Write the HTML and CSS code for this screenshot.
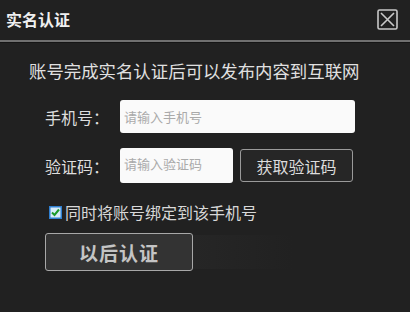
FILE: index.html
```html
<!DOCTYPE html>
<html lang="zh-CN">

<head>
  <meta charset="UTF-8">
  <title>实名认证</title>
  <link rel="stylesheet" href="styles.css">
</head>

<body>
  <div class="dialog">

    <div class="title-bar">
      <span class="title">实名认证</span>
      <span class="close">
        <svg width="21" height="21" viewBox="0 0 21 21">
          <rect x="1" y="1" width="19" height="19" rx="1.5" fill="none" stroke="#c8c8c8" stroke-width="1.6"/>
          <path d="M4 4 L17 17 M17 4 L4 17" stroke="#c8c8c8" stroke-width="1.6"/>
        </svg>
      </span>
    </div>

    <div class="body">
      <p class="intro">账号完成实名认证后可以发布内容到互联网</p>

      <div class="row phone-row">
        <label class="label">手机号：</label>
        <div class="input phone-input">请输入手机号</div>
      </div>

      <div class="row code-row">
        <label class="label">验证码：</label>
        <div class="input code-input">请输入验证码</div>
        <button class="btn get-code">获取验证码</button>
      </div>

      <div class="bind">
        <span class="checkbox">
          <svg width="13" height="13" viewBox="0 0 13 13">
            <rect x="0" y="0" width="13" height="13" fill="#2f7fd0"/>
            <rect x="1.5" y="1.5" width="10" height="10" fill="#d8ecfa"/>
            <path d="M3 6.5 L5.5 9 L10 3.5" fill="none" stroke="#1a9a2a" stroke-width="2"/>
          </svg>
        </span>
        <span class="bind-text">同时将账号绑定到该手机号</span>
      </div>

      <div class="actions">
        <button class="btn later">以后认证</button>
        <span class="shade"></span>
      </div>
    </div>

  </div>
</body>

</html>
```

FILE: styles.css
```css
* {
  margin: 0;
  padding: 0;
  box-sizing: border-box;
}

body {
  background: #202020;
  font-family: "Noto Sans CJK SC", "Liberation Sans", sans-serif;
  color: #dcdcdc;
}

.dialog {
  width: 410px;
  height: 312px;
  background: #212121;
}

.title-bar {
  height: 42px;
  display: flex;
  align-items: center;
  justify-content: space-between;
  padding: 0 12px 2px 6px;
  border-bottom: 2px solid #707070;
  box-shadow: 0 1px 0 #151515;
}

.title {
  font-size: 16px;
  font-weight: bold;
  color: #f0f0f0;
}

.close {
  display: flex;
}

.body {
  padding: 17px 0 0 45px;
}

.intro {
  font-size: 17.4px;
  line-height: 24px;
  margin-left: -16px;
  color: #e0e0e0;
}

.row {
  display: flex;
  align-items: center;
}

.phone-row {
  margin-top: 17px;
}

.code-row {
  margin-top: 15px;
}

.label {
  width: 75px;
  font-size: 16px;
  color: #dedede;
}

.input {
  background: #fafafa;
  border-radius: 3px;
  font-size: 13px;
  color: #aaa;
  padding-left: 4px;
  display: flex;
  align-items: center;
}

.phone-input {
  width: 235px;
  height: 33px;
}

.code-input {
  width: 113px;
  height: 35px;
  padding-bottom: 4px;
}

.btn {
  font-family: inherit;
  background: #262626;
  border: 1px solid #9a9a9a;
  border-radius: 3px;
  color: #dcdcdc;
}

.get-code {
  width: 113px;
  height: 33px;
  margin-left: 7px;
  font-size: 16px;
}

.bind {
  display: flex;
  align-items: center;
  margin-top: 17px;
  margin-left: 4px;
}

.checkbox {
  display: flex;
  margin-right: 3px;
}

.bind-text {
  font-size: 16px;
  color: #d8d8d8;
}

.actions {
  display: flex;
  align-items: center;
  margin-top: 9px;
}

.later {
  width: 148px;
  height: 38px;
  font-size: 19px;
  font-weight: bold;
  letter-spacing: 1px;
  background: #333;
  border-color: #a8a8a8;
  color: #c4c4c4;
}

.shade {
  width: 100px;
  height: 34px;
  background: linear-gradient(to right, #262626, #212121);
}
```
